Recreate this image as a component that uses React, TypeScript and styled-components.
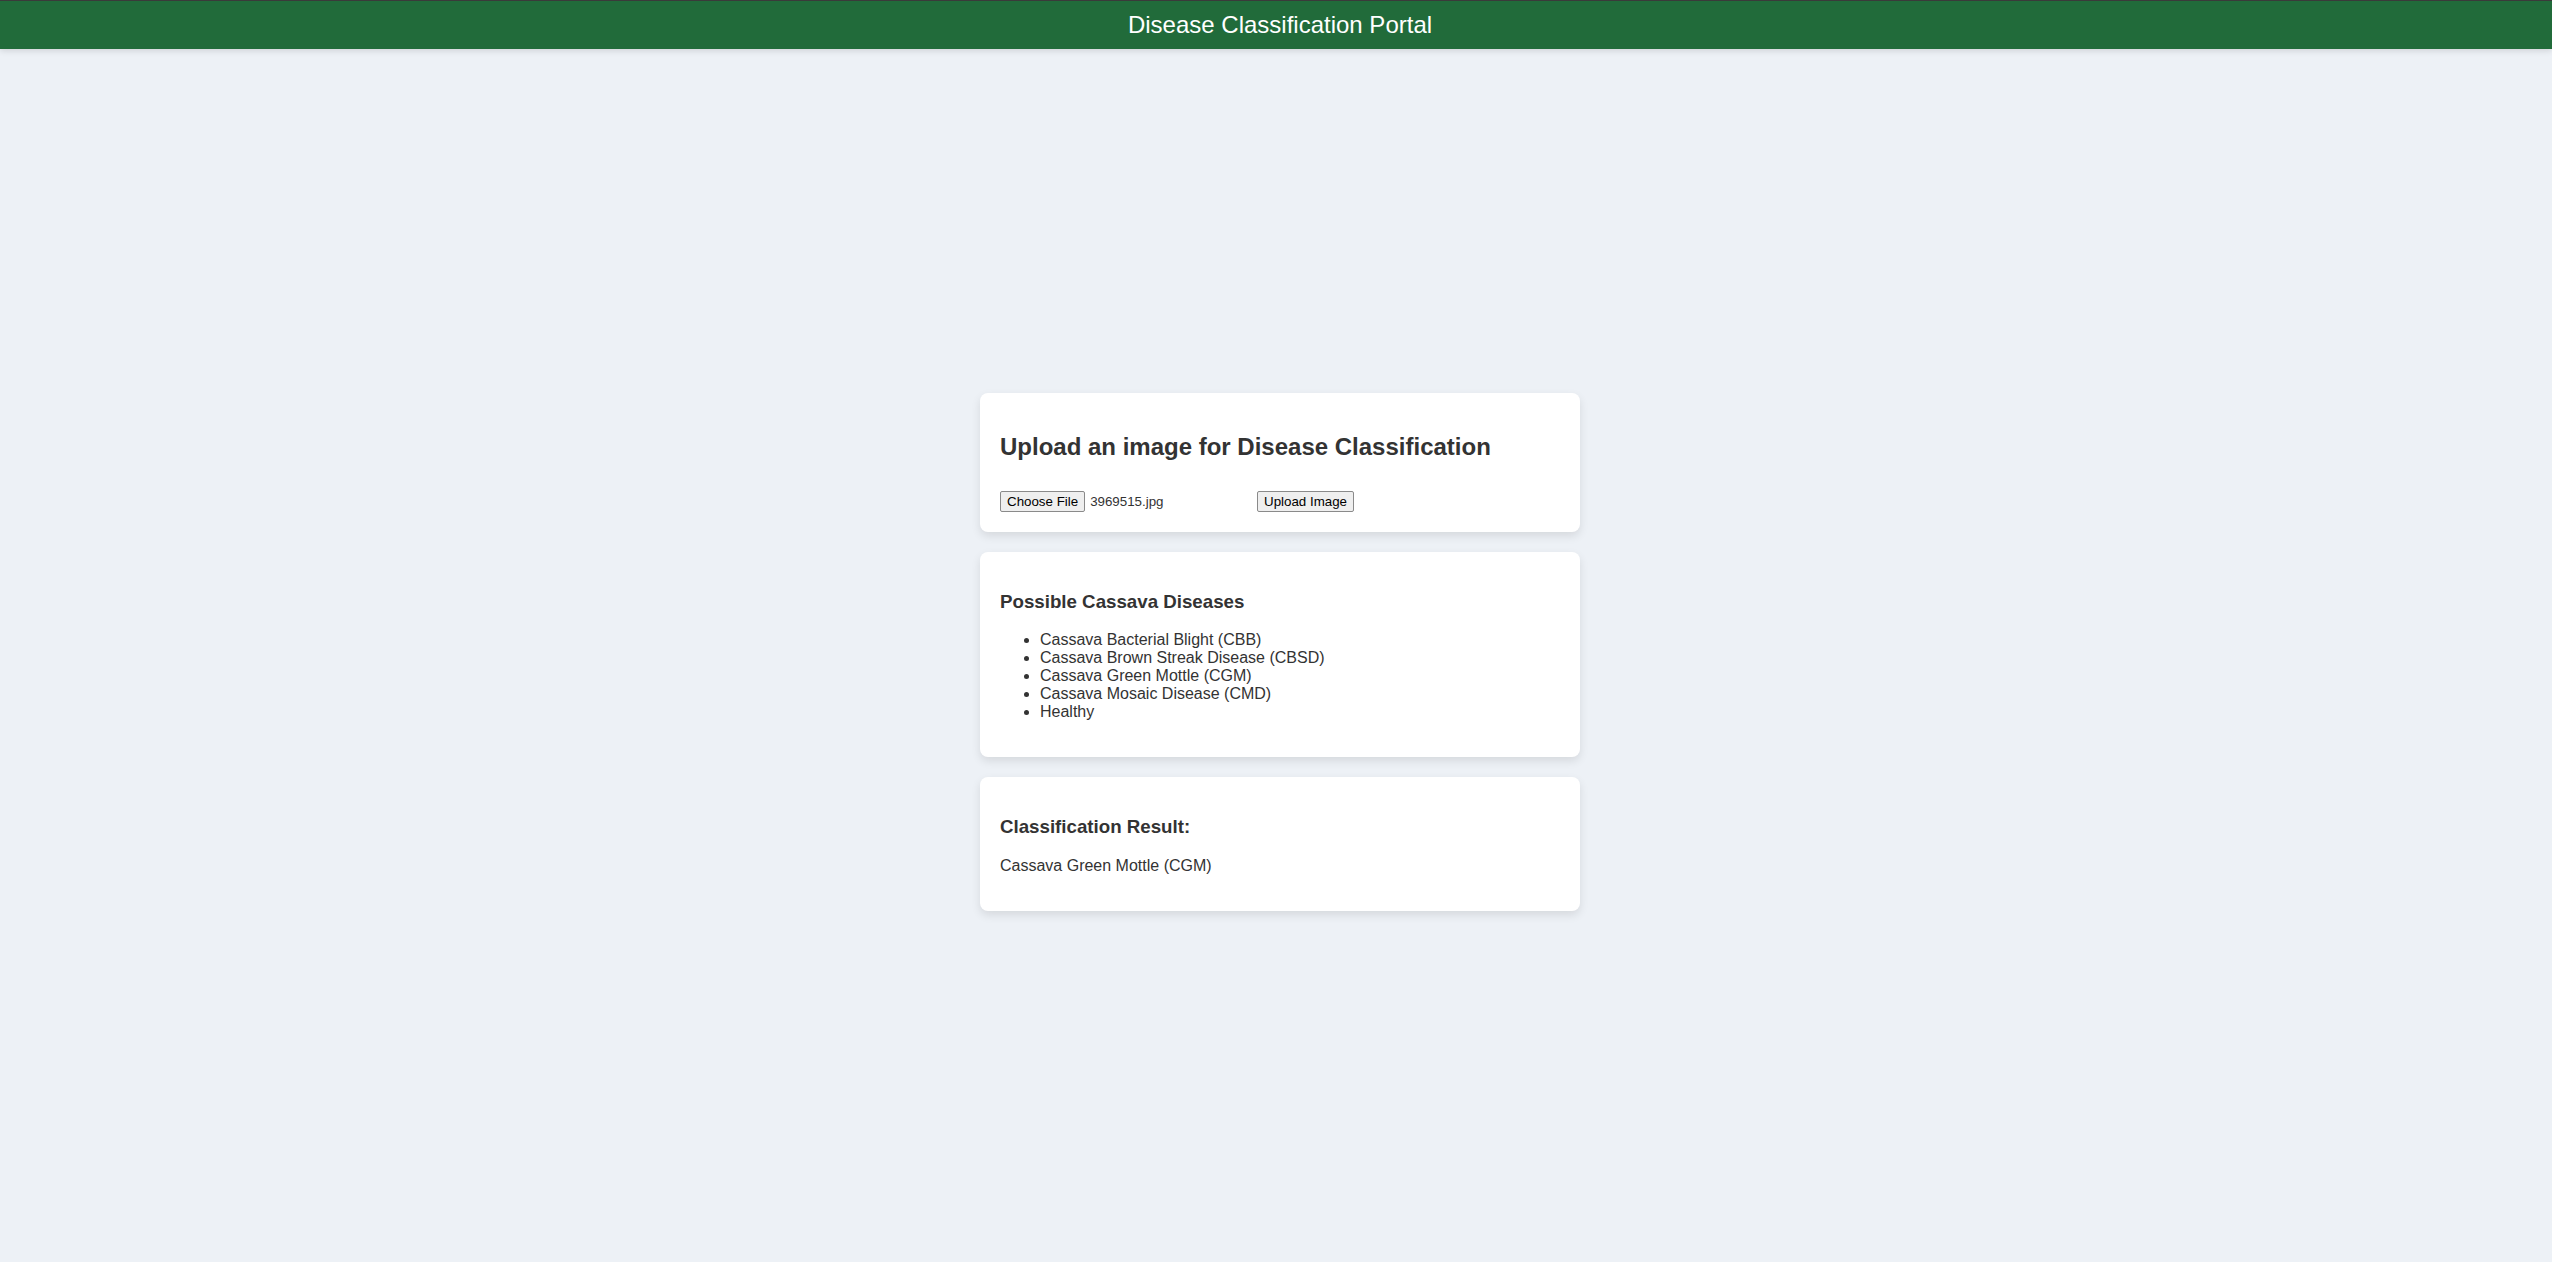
import React from "react";
import styled, { createGlobalStyle } from "styled-components";

const GlobalStyle = createGlobalStyle`
  html, body {
    margin: 0;
    padding: 0;
  }
  body {
    background: #edf1f6;
    font-family: "Liberation Sans", Arial, sans-serif;
    color: #333333;
  }
`;

const Header = styled.header`
  background: #216b3a;
  border-top: 1px solid #3a3a3a;
  color: #ffffff;
  text-align: center;
  padding: 10px 0 10px 8px;
  box-shadow: 0 2px 6px rgba(0, 0, 0, 0.12);
  position: relative;
`;

const HeaderTitle = styled.h1`
  margin: 0;
  font-size: 24px;
  font-weight: normal;
  line-height: normal;
`;

const Main = styled.main`
  display: flex;
  flex-direction: column;
  align-items: center;
  gap: 20px;
  padding: 344px 0 40px 8px;
`;

const Card = styled.section`
  width: 560px;
  background: #ffffff;
  border-radius: 8px;
  padding: 20px;
  box-shadow: 0 4px 10px rgba(0, 0, 0, 0.1);
`;

const CardTitle = styled.h2`
  font-size: 24px;
  font-weight: bold;
  margin: 20px 0 0;
  color: #333333;
`;

const SubTitle = styled.h3`
  font-size: 18.72px;
  font-weight: bold;
  margin: 18.72px 0;
  color: #333333;
`;

const UploadRow = styled.form`
  display: flex;
  align-items: center;
  margin-top: 30px;
`;

const FileField = styled.div`
  display: flex;
  align-items: center;
  width: 253px;
  margin-right: 4px;
  font-size: 13.33px;
  color: #333333;
`;

const NativeButton = styled.button<{ $gap?: number }>`
  font-family: "Liberation Sans", Arial, sans-serif;
  font-size: 13.33px;
  color: #000000;
  background: #efefef;
  border: 1px solid #8a8a8a;
  border-radius: 2px;
  padding: 2px 6px;
  margin: 0 ${(p) => p.$gap ?? 0}px 0 0;
  line-height: normal;
  cursor: pointer;
`;

const FileName = styled.span`
  font-size: 13.33px;
  color: #333333;
`;

const DiseaseList = styled.ul`
  margin: 16px 0;
  padding-left: 40px;
  font-size: 16px;
  color: #333333;
`;

const DiseaseItem = styled.li`
  line-height: normal;
`;

const ResultText = styled.p`
  margin: 16px 0;
  font-size: 16px;
  color: #333333;
`;

const diseases = [
  "Cassava Bacterial Blight (CBB)",
  "Cassava Brown Streak Disease (CBSD)",
  "Cassava Green Mottle (CGM)",
  "Cassava Mosaic Disease (CMD)",
  "Healthy",
];

export default function App() {
  return (
    <>
      <GlobalStyle />
      <Header>
        <HeaderTitle>Disease Classification Portal</HeaderTitle>
      </Header>
      <Main>
        <Card>
          <CardTitle>Upload an image for Disease Classification</CardTitle>
          <UploadRow onSubmit={(e) => e.preventDefault()}>
            <FileField>
              <NativeButton type="button" $gap={5}>
                Choose File
              </NativeButton>
              <FileName>3969515.jpg</FileName>
            </FileField>
            <NativeButton type="submit">Upload Image</NativeButton>
          </UploadRow>
        </Card>
        <Card>
          <SubTitle>Possible Cassava Diseases</SubTitle>
          <DiseaseList>
            {diseases.map((d) => (
              <DiseaseItem key={d}>{d}</DiseaseItem>
            ))}
          </DiseaseList>
        </Card>
        <Card>
          <SubTitle>Classification Result:</SubTitle>
          <ResultText>Cassava Green Mottle (CGM)</ResultText>
        </Card>
      </Main>
    </>
  );
}
